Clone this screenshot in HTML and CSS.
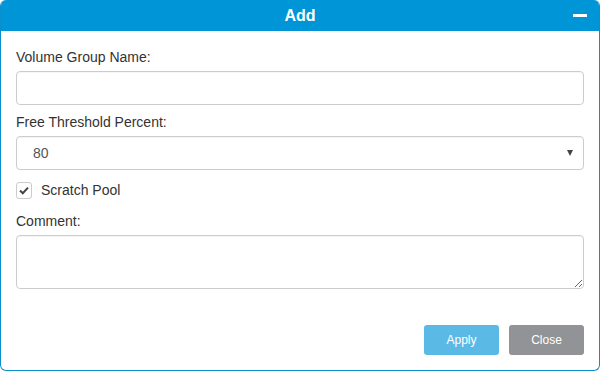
FILE: index.html
```html
<html>
<head>
    <title>Add</title>
    <link rel="stylesheet" href="styles.css">
</head>
<body>
    <div class="dialog">
        <div class="dialog-header">
            <span class="dialog-title">Add</span>
            <span class="minimize"></span>
        </div>
        <form class="dialog-body">
            <label class="field-label" for="vgname">Volume Group Name:</label>
            <input class="field" type="text" id="vgname" name="vgname">

            <label class="field-label" for="threshold">Free Threshold Percent:</label>
            <div class="select-wrap">
                <select class="field" id="threshold" name="threshold">
                    <option>80</option>
                </select>
                <span class="caret"></span>
            </div>

            <label class="check-row">
                <span class="checkbox">
                    <svg width="10" height="9" viewBox="0 0 10 9">
                        <path d="M1 4.5 L3.8 7.2 L9 1.6" fill="none" stroke="#444" stroke-width="2"/>
                    </svg>
                </span>
                Scratch Pool
            </label>

            <label class="field-label" for="comment">Comment:</label>
            <textarea class="field comment" id="comment" name="comment"></textarea>

            <div class="actions">
                <button type="button" class="btn btn-apply">Apply</button>
                <button type="button" class="btn btn-close">Close</button>
            </div>
        </form>
    </div>
</body>
</html>
```

FILE: styles.css
```css
body {
    margin: 0;
    font-family: "Liberation Sans", Arial, sans-serif;
    background: #ffffff;
}
.dialog {
    width: 600px;
    height: 371px;
    box-sizing: border-box;
    border: 1px solid #0a8fcc;
    border-top: none;
    border-radius: 6px;
    overflow: hidden;
    background: #fff;
}
.dialog-header {
    height: 31px;
    background: #0095d6;
    display: flex;
    align-items: center;
    justify-content: center;
    position: relative;
    margin: 0 -1px;
}
.dialog-title {
    color: #fff;
    font-weight: bold;
    font-size: 16px;
}
.minimize {
    position: absolute;
    right: 13px;
    top: 14px;
    width: 14px;
    height: 3px;
    background: #fff;
}
.dialog-body {
    padding: 16px 15px 0 15px;
    margin: 0;
    display: flex;
    flex-direction: column;
}
.field-label {
    display: block;
    font-size: 14px;
    line-height: 20px;
    color: #333;
    margin-bottom: 4px;
}
.field {
    box-sizing: border-box;
    width: 100%;
    height: 34px;
    border: 1px solid #ccc;
    border-radius: 4px;
    background: #fff;
    font-family: inherit;
    font-size: 14px;
    color: #555;
    margin: 0 0 7px 0;
    padding: 6px 12px;
    box-shadow: inset 0 1px 1px rgba(0,0,0,0.04);
}
.select-wrap {
    position: relative;
}
select.field {
    appearance: none;
    -webkit-appearance: none;
    padding-left: 16px;
    margin-bottom: 8px;
}
.caret {
    position: absolute;
    right: 11px;
    top: 14px;
    border-left: 3.5px solid transparent;
    border-right: 3.5px solid transparent;
    border-top: 6px solid #444;
}
.check-row {
    display: flex;
    align-items: center;
    font-size: 14px;
    line-height: 20px;
    color: #333;
    gap: 9px;
    margin: 2px 0 11px 0;
}
.checkbox {
    box-sizing: border-box;
    width: 16px;
    height: 17px;
    border: 1px solid #ccc;
    border-radius: 3px;
    display: flex;
    align-items: center;
    justify-content: center;
}
.comment {
    height: 54px;
    resize: vertical;
    margin-bottom: 0;
}
.actions {
    display: flex;
    justify-content: flex-end;
    gap: 10px;
    margin-top: 36px;
}
.btn {
    width: 75px;
    height: 30px;
    border: none;
    border-radius: 3px;
    color: #fff;
    font-family: inherit;
    font-size: 12px;
    cursor: pointer;
}
.btn-apply {
    background: #5bbae5;
}
.btn-close {
    background: #929396;
}
```
